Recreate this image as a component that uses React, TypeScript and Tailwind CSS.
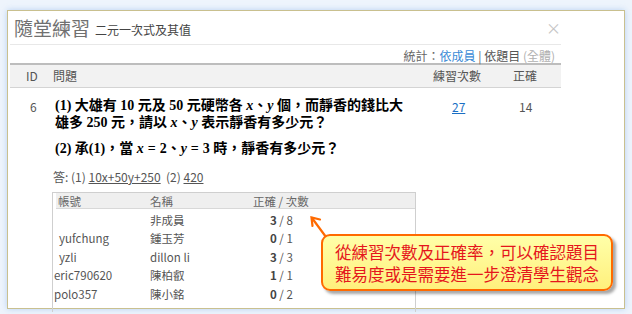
import React from 'react'

const ui = { fontFamily: '"Noto Sans CJK TC", "Noto Sans", sans-serif' }
const serif = { fontFamily: '"Liberation Serif", "Noto Sans CJK TC", serif' }

const members = [
  { account: '', name: '非成員', ok: 3, total: 8, pad: 'pl-[3px]' },
  { account: 'yufchung', name: '鍾玉芳', ok: 0, total: 1, pad: 'pl-[3px]' },
  { account: 'yzli', name: 'dillon li', ok: 3, total: 3, pad: 'pl-[3px]' },
  { account: 'eric790620', name: '陳柏叡', ok: 1, total: 1, pad: '-ml-[2px]' },
  { account: 'polo357', name: '陳小銘', ok: 0, total: 2, pad: '-ml-[2px]' },
]

function Var({ children }: { children: React.ReactNode }) {
  return <i className="font-bold">{children}</i>
}

function Eq() {
  return <span className="mx-[4px]">=</span>
}

export default function App() {
  return (
    <div className="relative w-[632px] h-[314px] overflow-hidden bg-[#eef4fc] pt-[10px] pl-[7px]" style={ui}>
      <div className="relative w-[618px] h-[299px] border border-[#c9c08f] bg-white shadow-[0_0_6px_rgba(160,195,240,0.7)]">
        {/* title */}
        <div className="flex items-center h-[33px] pl-[6px]">
          <span className="text-[19px] leading-none text-[#707070]">隨堂練習</span>
          <span className="ml-[5px] mt-[5px] text-[12px] leading-none text-[#444]">二元一次式及其值</span>
        </div>
        <span className="absolute right-[63px] top-[9px] text-[15px] leading-none text-[#c4c4c4]">×</span>

        <div className="ml-[2px] w-[551px] border-t border-[#e8e8e8]">
          <div className="h-[18px] pr-[6px] pt-[3px] text-right text-[12px] leading-[15px] text-[#666]">
            統計：<span className="text-[#3a8ad6]">依成員</span> | <span className="text-[#555]">依題目</span>{' '}
            <span className="text-[#b0b0b0]">(全體)</span>
          </div>

          {/* table header */}
          <div className="grid grid-cols-[43px_380px_80px_48px] h-[25px] items-center border-t-2 border-b border-t-[#bdbdbd] border-b-[#d4d4d4] bg-[#f2f2f2] text-[12px] text-[#555]">
            <span className="pl-[16px]">ID</span>
            <span>問題</span>
            <span>練習次數</span>
            <span>正確</span>
          </div>

          {/* row */}
          <div className="grid grid-cols-[43px_380px_80px_48px] pt-[9px]">
            <span className="pl-[20px] pt-[1px] text-[12px] leading-[17px] text-[#555]">6</span>
            <div>
              <div className="pl-[2px] text-[14px] leading-[17px] font-bold text-black" style={serif}>
                <p>
                  (1) 大雄有 10 元及 50 元硬幣各 <Var>x</Var>、<Var>y</Var> 個，而靜香的錢比大
                  <br />
                  雄多 250 元，請以 <Var>x</Var>、<Var>y</Var> 表示靜香有多少元？
                </p>
                <p className="mt-[9px]">
                  (2) 承(1)，當 <Var>x</Var>
                  <Eq />2、<Var>y</Var>
                  <Eq />3 時，靜香有多少元？
                </p>
              </div>
              <div className="mt-[13px] text-[12px] leading-[14px] text-[#555]">
                答: (1) <span className="underline">10x+50y+250</span>&nbsp; (2) <span className="underline">420</span>
              </div>

              {/* member table */}
              <div className="mt-[8px] -ml-[1px] w-[364px] h-[120px] border-l border-r border-t border-[#cfcfcf] pl-[3px] text-[11.5px] text-[#555]">
                <div className="grid grid-cols-[92px_103px_1fr] h-[16px] items-center bg-[#efefef] border-b border-[#d8d8d8] text-[#666]">
                  <span className="pl-[2px]">帳號</span>
                  <span className="pl-[2px]">名稱</span>
                  <span className="pl-[2px]">正確 / 次數</span>
                </div>
                <div className="pt-[2px]">
                  {members.map((m) => (
                    <div key={m.name} className="grid grid-cols-[92px_103px_1fr] h-[18.5px] items-center">
                      <span className={m.pad}>{m.account}</span>
                      <span className="pl-[2px]">{m.name}</span>
                      <span className="pl-[19px]">
                        <b className="text-[#444]">{m.ok}</b> / {m.total}
                      </span>
                    </div>
                  ))}
                </div>
              </div>
            </div>
            <span className="pl-[19px] pt-[1px] text-[12px] leading-[17px] text-[#1a6fc4] underline">27</span>
            <span className="pl-[6px] pt-[1px] text-[12px] leading-[17px] text-[#555]">14</span>
          </div>
        </div>
      </div>

      {/* arrow */}
      <svg className="absolute left-0 top-0 pointer-events-none" width="632" height="314">
        <g stroke="#ff6a00" strokeWidth="2.2" fill="none" strokeLinecap="round">
          <line x1="326" y1="237" x2="312" y2="218" />
          <polyline points="312.5,226 311.5,217.5 320,219.5" />
        </g>
      </svg>

      {/* callout */}
      <div className="absolute left-[321px] top-[234px] w-[292px] h-[57px] flex flex-col items-center justify-center rounded-[9px] border-2 border-[#ff6a00] bg-gradient-to-b from-[#ffffa8] to-[#fff07c] shadow-[3px_3px_3px_rgba(0,0,0,0.35)] text-[16.5px] leading-[22px] text-[#e5161c]">
        <div>從練習次數及正確率，可以確認題目</div>
        <div>難易度或是需要進一步澄清學生觀念</div>
      </div>
    </div>
  )
}
